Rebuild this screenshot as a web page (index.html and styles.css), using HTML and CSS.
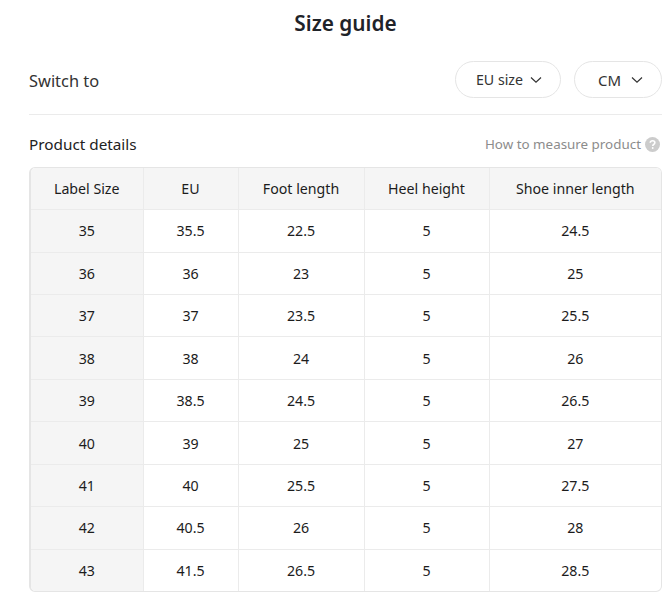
FILE: index.html
```html
<!DOCTYPE html>
<html lang="en">
<head>
<meta charset="utf-8">
<title>Size guide</title>
<link rel="stylesheet" href="styles.css">
</head>
<body>
<main class="guide">
  <h1 class="title">Size guide</h1>
  <div class="switch">
    <span class="switch-label">Switch to</span>
    <div class="selects">
      <button class="pill pill-size">EU size<svg class="chev" viewBox="0 0 12 8"><path d="M1 1.5 6 6.2 11 1.5"/></svg></button>
      <button class="pill pill-unit">CM<svg class="chev" viewBox="0 0 12 8"><path d="M1 1.5 6 6.2 11 1.5"/></svg></button>
    </div>
  </div>
  <div class="details">
    <span class="details-title">Product details</span>
    <span class="measure">How to measure product<svg class="help" viewBox="0 0 16 16"><circle cx="8" cy="8" r="8"/><path d="M5.6 6.2C5.7 4.8 6.7 4 8.1 4c1.4 0 2.4.8 2.4 2 0 1-.6 1.5-1.3 2-.6.4-.9.7-.9 1.5"/><circle class="dot" cx="8.2" cy="11.7" r="1"/></svg></span>
  </div>
  <div class="table-wrap">
    <table class="sizes">
      <thead>
        <tr><th>Label Size</th><th>EU</th><th>Foot length</th><th>Heel height</th><th>Shoe inner length</th></tr>
      </thead>
      <tbody>
        <tr><th>35</th><td>35.5</td><td>22.5</td><td>5</td><td>24.5</td></tr>
        <tr><th>36</th><td>36</td><td>23</td><td>5</td><td>25</td></tr>
        <tr><th>37</th><td>37</td><td>23.5</td><td>5</td><td>25.5</td></tr>
        <tr><th>38</th><td>38</td><td>24</td><td>5</td><td>26</td></tr>
        <tr><th>39</th><td>38.5</td><td>24.5</td><td>5</td><td>26.5</td></tr>
        <tr><th>40</th><td>39</td><td>25</td><td>5</td><td>27</td></tr>
        <tr><th>41</th><td>40</td><td>25.5</td><td>5</td><td>27.5</td></tr>
        <tr><th>42</th><td>40.5</td><td>26</td><td>5</td><td>28</td></tr>
        <tr><th>43</th><td>41.5</td><td>26.5</td><td>5</td><td>28.5</td></tr>
      </tbody>
    </table>
  </div>
</main>
</body>
</html>
```
FILE: styles.css
```css
* { box-sizing: border-box; }
html, body { margin: 0; padding: 0; background: #fff; }
body { font-family: "Noto Sans", "Open Sans", sans-serif; color: #222; overflow: hidden; height: 599px; }
.guide { padding: 0 1px 0 29px; }
.title { margin: 0; height: 48px; line-height: 47px; font-size: 20.8px; font-weight: 600; text-align: center; color: #1f2329; }
.switch { display: flex; justify-content: space-between; align-items: center; height: 67px; padding-bottom: 3px; border-bottom: 1px solid #ebebeb; }
.switch-label { font-size: 16.4px; color: #333; padding-top: 2px; }
.selects { display: flex; gap: 13px; }
.pill { display: flex; align-items: center; justify-content: center; height: 37px; border: 1px solid #e5e5e5; border-radius: 19px; background: #fff; font: inherit; font-size: 14.2px; color: #333; padding: 0; }
.pill-size { width: 106px; gap: 7px; padding-left: 2px; }
.pill-unit { width: 88px; gap: 10px; padding-left: 5px; font-size: 15px; }
.chev { width: 12px; height: 8px; fill: none; stroke: #333; stroke-width: 1.2; }
.details { display: flex; justify-content: space-between; align-items: center; height: 52px; padding-right: 2px; padding-top: 6px; }
.details-title { font-size: 15.3px; color: #222; }
.measure { display: flex; align-items: center; gap: 4px; font-size: 13.4px; color: #8c8c8c; }
.help { width: 15px; height: 15px; }
.help circle { fill: #ccc; }
.help path { fill: none; stroke: #fff; stroke-width: 1.7; }
.help .dot { fill: #fff; }
.table-wrap { border: 1px solid #e5e5e5; border-left-width: 2px; border-radius: 6px; overflow: hidden; height: 425px; }
.sizes { width: 100%; border-collapse: collapse; table-layout: fixed; font-size: 14.2px; }
.sizes thead tr { height: 41.6px; }
.sizes tbody tr { height: 42.45px; }
.sizes th, .sizes td { font-weight: 400; text-align: center; padding: 0; border: 1px solid #ebebeb; color: #1c1c1c; }
.sizes tr > :first-child { width: 112px; background: #f5f5f5; border-left: 0; }
.sizes tr > :nth-child(2) { width: 95px; }
.sizes tr > :nth-child(3) { width: 126px; }
.sizes tr > :nth-child(4) { width: 125px; }
.sizes tr > :last-child { border-right: 0; }
.sizes thead th { background: #f5f5f5; border-top: 0; }
.sizes tbody tr:last-child > * { border-bottom: 0; }
```
